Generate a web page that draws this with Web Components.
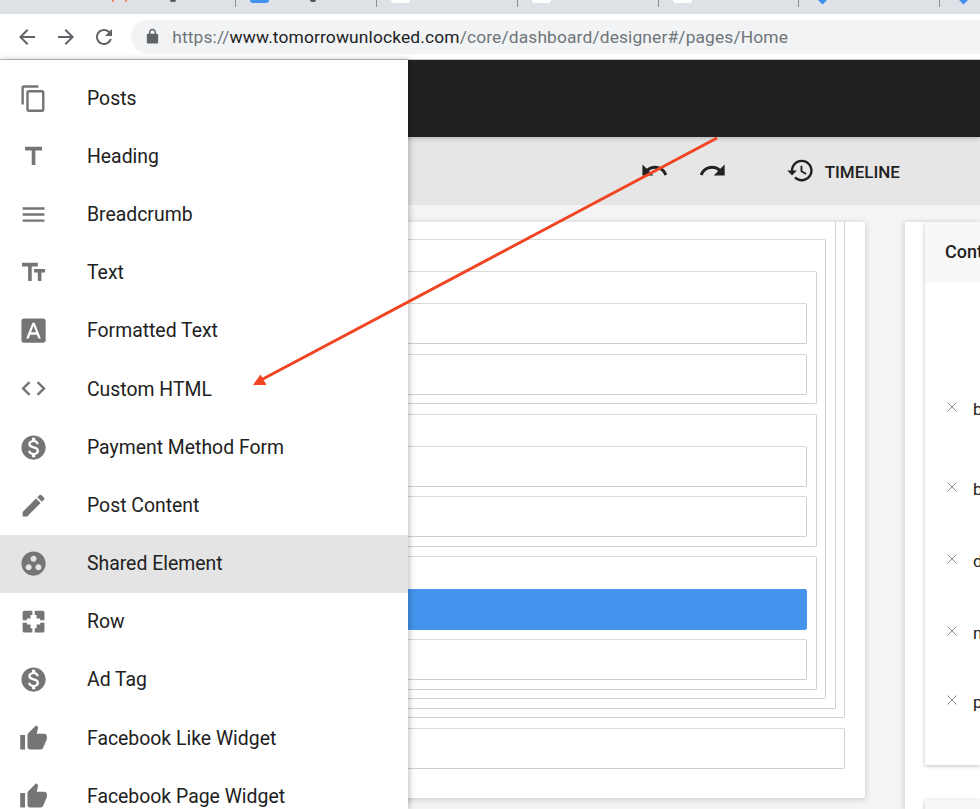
<!DOCTYPE html>
<html lang="en">
<head>
<meta charset="utf-8">
<title>Designer</title>
<style>
  html, body { margin: 0; height: 100%; background: #fff; }
  body { font-family: Roboto, "Liberation Sans", sans-serif; overflow: hidden; }
</style>
</head>
<body>
<designer-app>
  <browser-bar slot="chrome" url-origin="www.tomorrowunlocked.com" url-path="/core/dashboard/designer#/pages/Home"></browser-bar>
  <dark-header slot="chrome"></dark-header>
  <edit-toolbar slot="chrome"></edit-toolbar>

  <design-canvas slot="canvas">
    <canvas-box>
      <canvas-box>
        <canvas-box>
          <canvas-box>
            <canvas-box leaf></canvas-box>
            <canvas-box leaf></canvas-box>
          </canvas-box>
          <canvas-box>
            <canvas-box leaf></canvas-box>
            <canvas-box leaf></canvas-box>
          </canvas-box>
          <canvas-box>
            <canvas-box leaf selected></canvas-box>
            <canvas-box leaf></canvas-box>
          </canvas-box>
        </canvas-box>
      </canvas-box>
    </canvas-box>
    <canvas-box leaf></canvas-box>
  </design-canvas>

  <side-panel slot="panel">
    <panel-card heading="Cont">
      <panel-row style="--h:80px">b</panel-row>
      <panel-row style="--h:72px">b</panel-row>
      <panel-row style="--h:72px">d</panel-row>
      <panel-row style="--h:69px">m</panel-row>
      <panel-row style="--h:74px">p</panel-row>
    </panel-card>
    <panel-card></panel-card>
  </side-panel>

  <element-menu slot="overlay">
    <menu-entry icon="copy">Posts</menu-entry>
    <menu-entry icon="title">Heading</menu-entry>
    <menu-entry icon="lines">Breadcrumb</menu-entry>
    <menu-entry icon="textfields">Text</menu-entry>
    <menu-entry icon="fontdownload">Formatted Text</menu-entry>
    <menu-entry icon="code">Custom HTML</menu-entry>
    <menu-entry icon="dollar">Payment Method Form</menu-entry>
    <menu-entry icon="edit">Post Content</menu-entry>
    <menu-entry icon="group" active>Shared Element</menu-entry>
    <menu-entry icon="row">Row</menu-entry>
    <menu-entry icon="dollar">Ad Tag</menu-entry>
    <menu-entry icon="thumb">Facebook Like Widget</menu-entry>
    <menu-entry icon="thumb">Facebook Page Widget</menu-entry>
  </element-menu>

  <arrow-note slot="overlay"></arrow-note>
</designer-app>

<script>
const ICONS = {
  back: '<path d="M20 11H7.83l5.59-5.59L12 4l-8 8 8 8 1.41-1.41L7.83 13H20v-2z"/>',
  forward: '<path d="M12 4l-1.41 1.41L16.17 11H4v2h12.17l-5.58 5.59L12 20l8-8z"/>',
  reload: '<path d="M17.65 6.35C16.2 4.9 14.21 4 12 4c-4.42 0-7.99 3.58-7.99 8s3.57 8 7.99 8c3.73 0 6.84-2.55 7.73-6h-2.08c-.82 2.33-3.04 4-5.65 4-3.31 0-6-2.69-6-6s2.69-6 6-6c1.66 0 3.14.69 4.22 1.78L13 11h7V4l-2.35 2.35z"/>',
  lock: '<path d="M18 8h-1V6c0-2.76-2.24-5-5-5S7 3.24 7 6v2H6c-1.1 0-2 .9-2 2v10c0 1.1.9 2 2 2h12c1.1 0 2-.9 2-2V10c0-1.1-.9-2-2-2zM9 6c0-1.66 1.34-3 3-3s3 1.34 3 3v2H9V6z"/>',
  copy: '<path d="M16 1H4c-1.1 0-2 .9-2 2v14h2V3h12V1zm3 4H8c-1.1 0-2 .9-2 2v14c0 1.1.9 2 2 2h11c1.1 0 2-.9 2-2V7c0-1.1-.9-2-2-2zm0 16H8V7h11v14z"/>',
  title: '<path d="M5 4v3h5.5v12h3V7H19V4z"/>',
  lines: '<path d="M3 18h18v-2H3v2zm0-5h18v-2H3v2zm0-7v2h18V6H3z"/>',
  textfields: '<path d="M2.5 4v3h5v12h3V7h5V4h-13zm19 5h-9v3h3v7h3v-7h3V9z"/>',
  fontdownload: '<path d="M9.93 13.5h4.14L12 7.98zM20 2H4c-1.1 0-2 .9-2 2v16c0 1.1.9 2 2 2h16c1.1 0 2-.9 2-2V4c0-1.1-.9-2-2-2zm-4.05 16.5l-1.14-3H9.17l-1.12 3H5.96l5.11-13h1.86l5.11 13h-2.09z"/>',
  code: '<path d="M9.4 16.6L4.8 12l4.6-4.6L8 6l-6 6 6 6 1.4-1.4zm5.2 0l4.6-4.6-4.6-4.6L16 6l6 6-6 6-1.4-1.4z"/>',
  dollar: '<path d="M12 2C6.48 2 2 6.48 2 12s4.48 10 10 10 10-4.48 10-10S17.52 2 12 2zm1.41 16.09V20h-2.67v-1.93c-1.71-.36-3.16-1.46-3.27-3.4h1.96c.1 1.05.82 1.87 2.65 1.87 1.96 0 2.4-.98 2.4-1.59 0-.83-.44-1.61-2.67-2.14-2.48-.6-4.18-1.62-4.18-3.67 0-1.72 1.39-2.84 3.11-3.21V4h2.67v1.95c1.86.45 2.79 1.86 2.85 3.39H14.3c-.05-1.11-.64-1.87-2.22-1.87-1.5 0-2.4.68-2.4 1.64 0 .84.65 1.39 2.67 1.91s4.18 1.39 4.18 3.91c-.01 1.83-1.38 2.83-3.12 3.16z"/>',
  edit: '<path d="M3 17.25V21h3.75L17.81 9.94l-3.75-3.75L3 17.25zM20.71 7.04c.39-.39.39-1.02 0-1.41l-2.34-2.34c-.39-.39-1.02-.39-1.41 0l-1.83 1.83 3.75 3.75 1.83-1.83z"/>',
  group: '<path d="M12 2C6.48 2 2 6.48 2 12s4.48 10 10 10 10-4.48 10-10S17.52 2 12 2zM8 17.5c-1.38 0-2.5-1.12-2.5-2.5s1.12-2.5 2.5-2.5 2.5 1.12 2.5 2.5-1.12 2.5-2.5 2.5zM9.5 8c0-1.38 1.12-2.5 2.5-2.5s2.5 1.12 2.5 2.5-1.12 2.5-2.5 2.5S9.5 9.38 9.5 8zm6.5 9.5c-1.38 0-2.5-1.12-2.5-2.5s1.12-2.5 2.5-2.5 2.5 1.12 2.5 2.5-1.12 2.5-2.5 2.5z"/>',
  row: '<path d="M4.5 3H11v3.500H9.500v3h-3V11H3V4.500C3 3.700 3.700 3 4.500 3zM13 3h6.500c.8 0 1.500.7 1.500 1.500V11h-3.500V9.500h-3v-3H13zM3 13h3.500v1.500h3v3H11V21H4.500C3.700 21 3 20.300 3 19.500zM17.500 13H21v6.500c0 .8-.7 1.500-1.500 1.500H13v-3.500h1.500v-3h3z"/>',
  thumb: '<path d="M1 21h4V9H1v12zm22-11c0-1.100-.9-2-2-2h-6.310l.95-4.570.03-.32c0-.41-.17-.79-.44-1.060L14.170 1 7.590 7.590C7.220 7.950 7 8.450 7 9v10c0 1.100.9 2 2 2h9c.83 0 1.540-.5 1.840-1.220l3.020-7.050c.09-.23.14-.47.14-.73v-2z"/>',
  undo: '<path d="M12.500 8c-2.650 0-5.050.99-6.900 2.600L2 7v9h9l-3.620-3.620c1.390-1.160 3.160-1.880 5.120-1.880 3.540 0 6.550 2.310 7.600 5.500l2.370-.78C21.080 11.030 17.150 8 12.500 8z"/>',
  redo: '<path d="M18.400 10.600C16.550 8.990 14.150 8 11.500 8c-4.650 0-8.580 3.030-9.960 7.220L3.900 16c1.050-3.190 4.050-5.500 7.600-5.500 1.950 0 3.730.72 5.120 1.880L13 16h9V7l-3.600 3.600z"/>',
  history: '<path d="M13 3c-4.970 0-9 4.030-9 9H1l3.890 3.890.07.14L9 12H6c0-3.870 3.130-7 7-7s7 3.130 7 7-3.130 7-7 7c-1.930 0-3.680-.79-4.940-2.060l-1.420 1.420C8.270 19.990 10.510 21 13 21c4.970 0 9-4.030 9-9s-4.030-9-9-9zm-1 5v5l4.280 2.540.72-1.210-3.500-2.080V8H12z"/>'
};

function define(name, html, extra) {
  const tpl = document.createElement('template');
  tpl.innerHTML = html;
  customElements.define(name, class extends HTMLElement {
    constructor() {
      super();
      this.attachShadow({ mode: 'open' }).appendChild(tpl.content.cloneNode(true));
    }
    connectedCallback() { if (extra) extra(this, this.shadowRoot); }
  });
}

define('app-icon', `
  <style>
    :host { display: block; width: var(--size, 29.1px); height: var(--size, 29.1px); flex: none; color: inherit; }
    svg { display: block; width: 100%; height: 100%; fill: currentColor; }
  </style>
  <svg viewBox="0 0 24 24"></svg>`,
  (el, root) => { root.querySelector('svg').innerHTML = ICONS[el.getAttribute('name')] || ''; });

define('designer-app', `
  <style>
    :host { display: flex; flex-direction: column; position: relative; width: 980px; height: 809px; overflow: hidden; background: #f4f4f4; }
    main { flex: 1; min-height: 0; display: flex; gap: 40px; padding-top: 17px; }
  </style>
  <slot name="chrome"></slot>
  <main>
    <slot name="canvas"></slot>
    <slot name="panel"></slot>
  </main>
  <slot name="overlay"></slot>`);

define('browser-tab', `
  <style>
    :host { display: flex; position: relative; width: var(--w, 140.700px); height: 14px; flex: none; box-sizing: border-box; padding-left: 14px; }
    :host(:not([nosep]))::after { content: ""; position: absolute; right: 0; top: 0; width: 1px; height: 7px; background: #8d9095; }
    .slot { display: flex; justify-content: space-between; width: 19px; height: 3px; }
    .fav-blue { background: #4392ee; border-radius: 0 0 3px 3px; }
    .fav-white { background: #fff; border-radius: 0 0 3px 3px; }
    .fav-diamond { justify-content: center; }
    .fav-diamond::before { content: ""; display: block; width: 7px; height: 7px; margin-top: -4px; background: #3f8cf2; transform: rotate(45deg); }
    .fav-red { padding: 0 2px; box-sizing: border-box; }
    .fav-red::before, .fav-red::after { content: ""; display: block; width: 2px; height: 2px; background: #ec8a70; }
    b { position: absolute; left: 74px; top: 0; width: 6px; height: 2px; background: #555; border-radius: 0 0 3px 3px; }
  </style>
  <div class="slot"></div>`,
  (el, root) => {
    root.querySelector('.slot').classList.add('fav-' + (el.getAttribute('fav') || 'none'));
    if (el.hasAttribute('dot')) root.appendChild(document.createElement('b'));
  });

define('browser-bar', `
  <style>
    :host { display: block; flex: none; height: 60px; background: #fff; overflow: hidden; box-sizing: border-box; border-bottom: 1px solid #c9c9c9; }
    .tabs { display: flex; height: 14px; background: #dee1e6; overflow: hidden; }
    .tools { display: flex; align-items: center; height: 45px; padding: 0 0 0 15px; color: #5f6368; }
    .nav { display: flex; gap: 14.600px; --size: 24px; }
    .pill { display: flex; align-items: center; flex: none; width: 900px; height: 34px; margin-left: 15px; border-radius: 17px; background: #f1f3f4; padding-left: 13px; box-sizing: border-box; }
    .lock { --size: 17px; margin-right: 11px; }
    .url { font: 400 17.400px Roboto, "Liberation Sans", sans-serif; color: #70757a; white-space: nowrap; letter-spacing: .13px; }
    .url b { font-weight: 400; color: #202124; }
  </style>
  <div class="tabs">
    <browser-tab nosep style="--w:95.800px"></browser-tab>
    <browser-tab fav="red" dot></browser-tab>
    <browser-tab fav="blue" dot></browser-tab>
    <browser-tab fav="white"></browser-tab>
    <browser-tab fav="white"></browser-tab>
    <browser-tab fav="white"></browser-tab>
    <browser-tab fav="diamond" style="--w:140.700px;padding-left:14px"></browser-tab>
    <browser-tab fav="diamond"></browser-tab>
  </div>
  <div class="tools">
    <div class="nav">
      <app-icon name="back"></app-icon>
      <app-icon name="forward"></app-icon>
      <app-icon name="reload"></app-icon>
    </div>
    <div class="pill">
      <app-icon class="lock" name="lock"></app-icon>
      <div class="url"></div>
    </div>
  </div>`,
  (el, root) => {
    const url = root.querySelector('.url');
    url.innerHTML = 'https://<b></b>';
    url.querySelector('b').textContent = el.getAttribute('url-origin');
    url.appendChild(document.createTextNode(el.getAttribute('url-path')));
  });

define('dark-header', `
  <style>
    :host { display: block; flex: none; height: 77px; background: #212121; box-shadow: 0 2px 4px rgba(0,0,0,.18); position: relative; z-index: 1; }
  </style>`);

define('edit-toolbar', `
  <style>
    :host { display: flex; align-items: center; flex: none; height: 68px; background: #e6e6e6; padding: 0 0 0 640.300px; box-sizing: border-box; color: #212121; }
    .gap1 { width: 29px; flex: none; }
    .gap2 { width: 58.600px; flex: none; }
    .label { font: 500 17px Roboto, "Liberation Sans", sans-serif; margin: 2px 0 0 9.500px; color: #212121; }
  </style>
  <app-icon name="undo"></app-icon>
  <div class="gap1"></div>
  <app-icon name="redo"></app-icon>
  <div class="gap2"></div>
  <app-icon name="history"></app-icon>
  <span class="label">TIMELINE</span>`);

define('design-canvas', `
  <style>
    :host { display: flex; flex-direction: column; justify-content: flex-end; gap: 9.600px; flex: none; width: 865px; height: 576px; padding: 0 20px 29.400px 0; box-sizing: border-box; overflow: hidden; background: #fff; box-shadow: 0 1px 6px rgba(0,0,0,.2); border-radius: 0 0 2px 0; }
  </style>
  <slot></slot>`);

define('canvas-box', `
  <style>
    :host { display: flex; flex-direction: column; flex: none; gap: 9.400px; box-sizing: border-box; border: 1px solid #d9d9d9; border-bottom-color: #cfcfcf; border-right-color: #cfcfcf; border-radius: 2px; padding: 31.300px 8.500px 8.500px 8.500px; background: #fff; }
    :host([leaf]) { height: 41px; padding: 0; }
    :host([selected]) { background: #4493ec; border-color: #4a97ee; }
  </style>
  <slot></slot>`);

define('side-panel', `
  <style>
    :host { display: flex; flex-direction: column; gap: 35px; flex: 1; min-width: 0; padding-left: 20px; background: #fff; box-shadow: -1px 0 5px rgba(0,0,0,.16); overflow: hidden; padding-bottom: 40px; height: 587px; box-sizing: border-box; }
  </style>
  <slot></slot>`);

define('panel-card', `
  <style>
    :host { display: block; flex: none; width: 100%; background: #fff; box-shadow: 0 1px 4px rgba(0,0,0,.25); border-radius: 2px 0 0 2px; overflow: hidden; }
    header { height: 61px; background: #f8f8f8; box-sizing: border-box; padding: 19px 0 0 20px; font: 500 18px/22px Roboto, "Liberation Sans", sans-serif; color: #212121; white-space: nowrap; overflow: hidden; }
    .body { padding-top: 0; }
    .body.filled { padding-top: 115px; }
  </style>
  <header></header>
  <div class="body"><slot></slot></div>`,
  (el, root) => {
    root.querySelector('header').textContent = el.getAttribute('heading') || '';
    if (el.children.length) root.querySelector('.body').classList.add('filled');
  });

define('panel-row', `
  <style>
    :host { display: flex; align-items: flex-start; height: var(--h, 72px); padding-left: 21.500px; font: 400 17px/22px Roboto, "Liberation Sans", sans-serif; color: #212121; overflow: hidden; box-sizing: border-box; white-space: nowrap; }
    svg { display: block; flex: none; width: 10px; height: 10px; margin: 4px 16.500px 0 0; stroke: #8f8f8f; stroke-width: 1; fill: none; }
  </style>
  <svg viewBox="0 0 10 10"><path d="M.5.5l9 9M9.500.5l-9 9"/></svg>
  <slot></slot>`);

define('element-menu', `
  <style>
    :host { display: block; position: absolute; left: 0; top: 60px; bottom: 0; width: 408px; padding-top: 9px; box-sizing: border-box; background: #fff; overflow: hidden; box-shadow: 1px 0 6px rgba(0,0,0,.28); z-index: 5; }
  </style>
  <slot></slot>`);

define('menu-entry', `
  <style>
    :host { display: flex; align-items: center; height: 58.200px; padding-left: 19.400px; font: 400 19.400px Roboto, "Liberation Sans", sans-serif; color: #212121; white-space: nowrap; }
    :host([active]) { background: #e4e4e4; }
    app-icon { color: #757575; margin-right: 38.500px; }
  </style>
  <app-icon></app-icon>
  <slot></slot>`,
  (el, root) => {
    const ic = root.querySelector('app-icon');
    ic.setAttribute('name', el.getAttribute('icon'));
    if (ic.shadowRoot) ic.shadowRoot.querySelector('svg').innerHTML = ICONS[el.getAttribute('icon')] || '';
  });

define('arrow-note', `
  <style>
    :host { display: block; position: absolute; left: 0; top: 0; width: 980px; height: 809px; pointer-events: none; z-index: 9; }
    svg { display: block; width: 100%; height: 100%; }
  </style>
  <svg viewBox="0 0 980 809" aria-hidden="true">
    <line x1="717" y1="138" x2="261" y2="380" stroke="#f04423" stroke-width="3"/>
    <polygon points="253,385 260.500,374.500 266.500,385" fill="#f04423"/>
  </svg>`);
</script>
</body>
</html>
